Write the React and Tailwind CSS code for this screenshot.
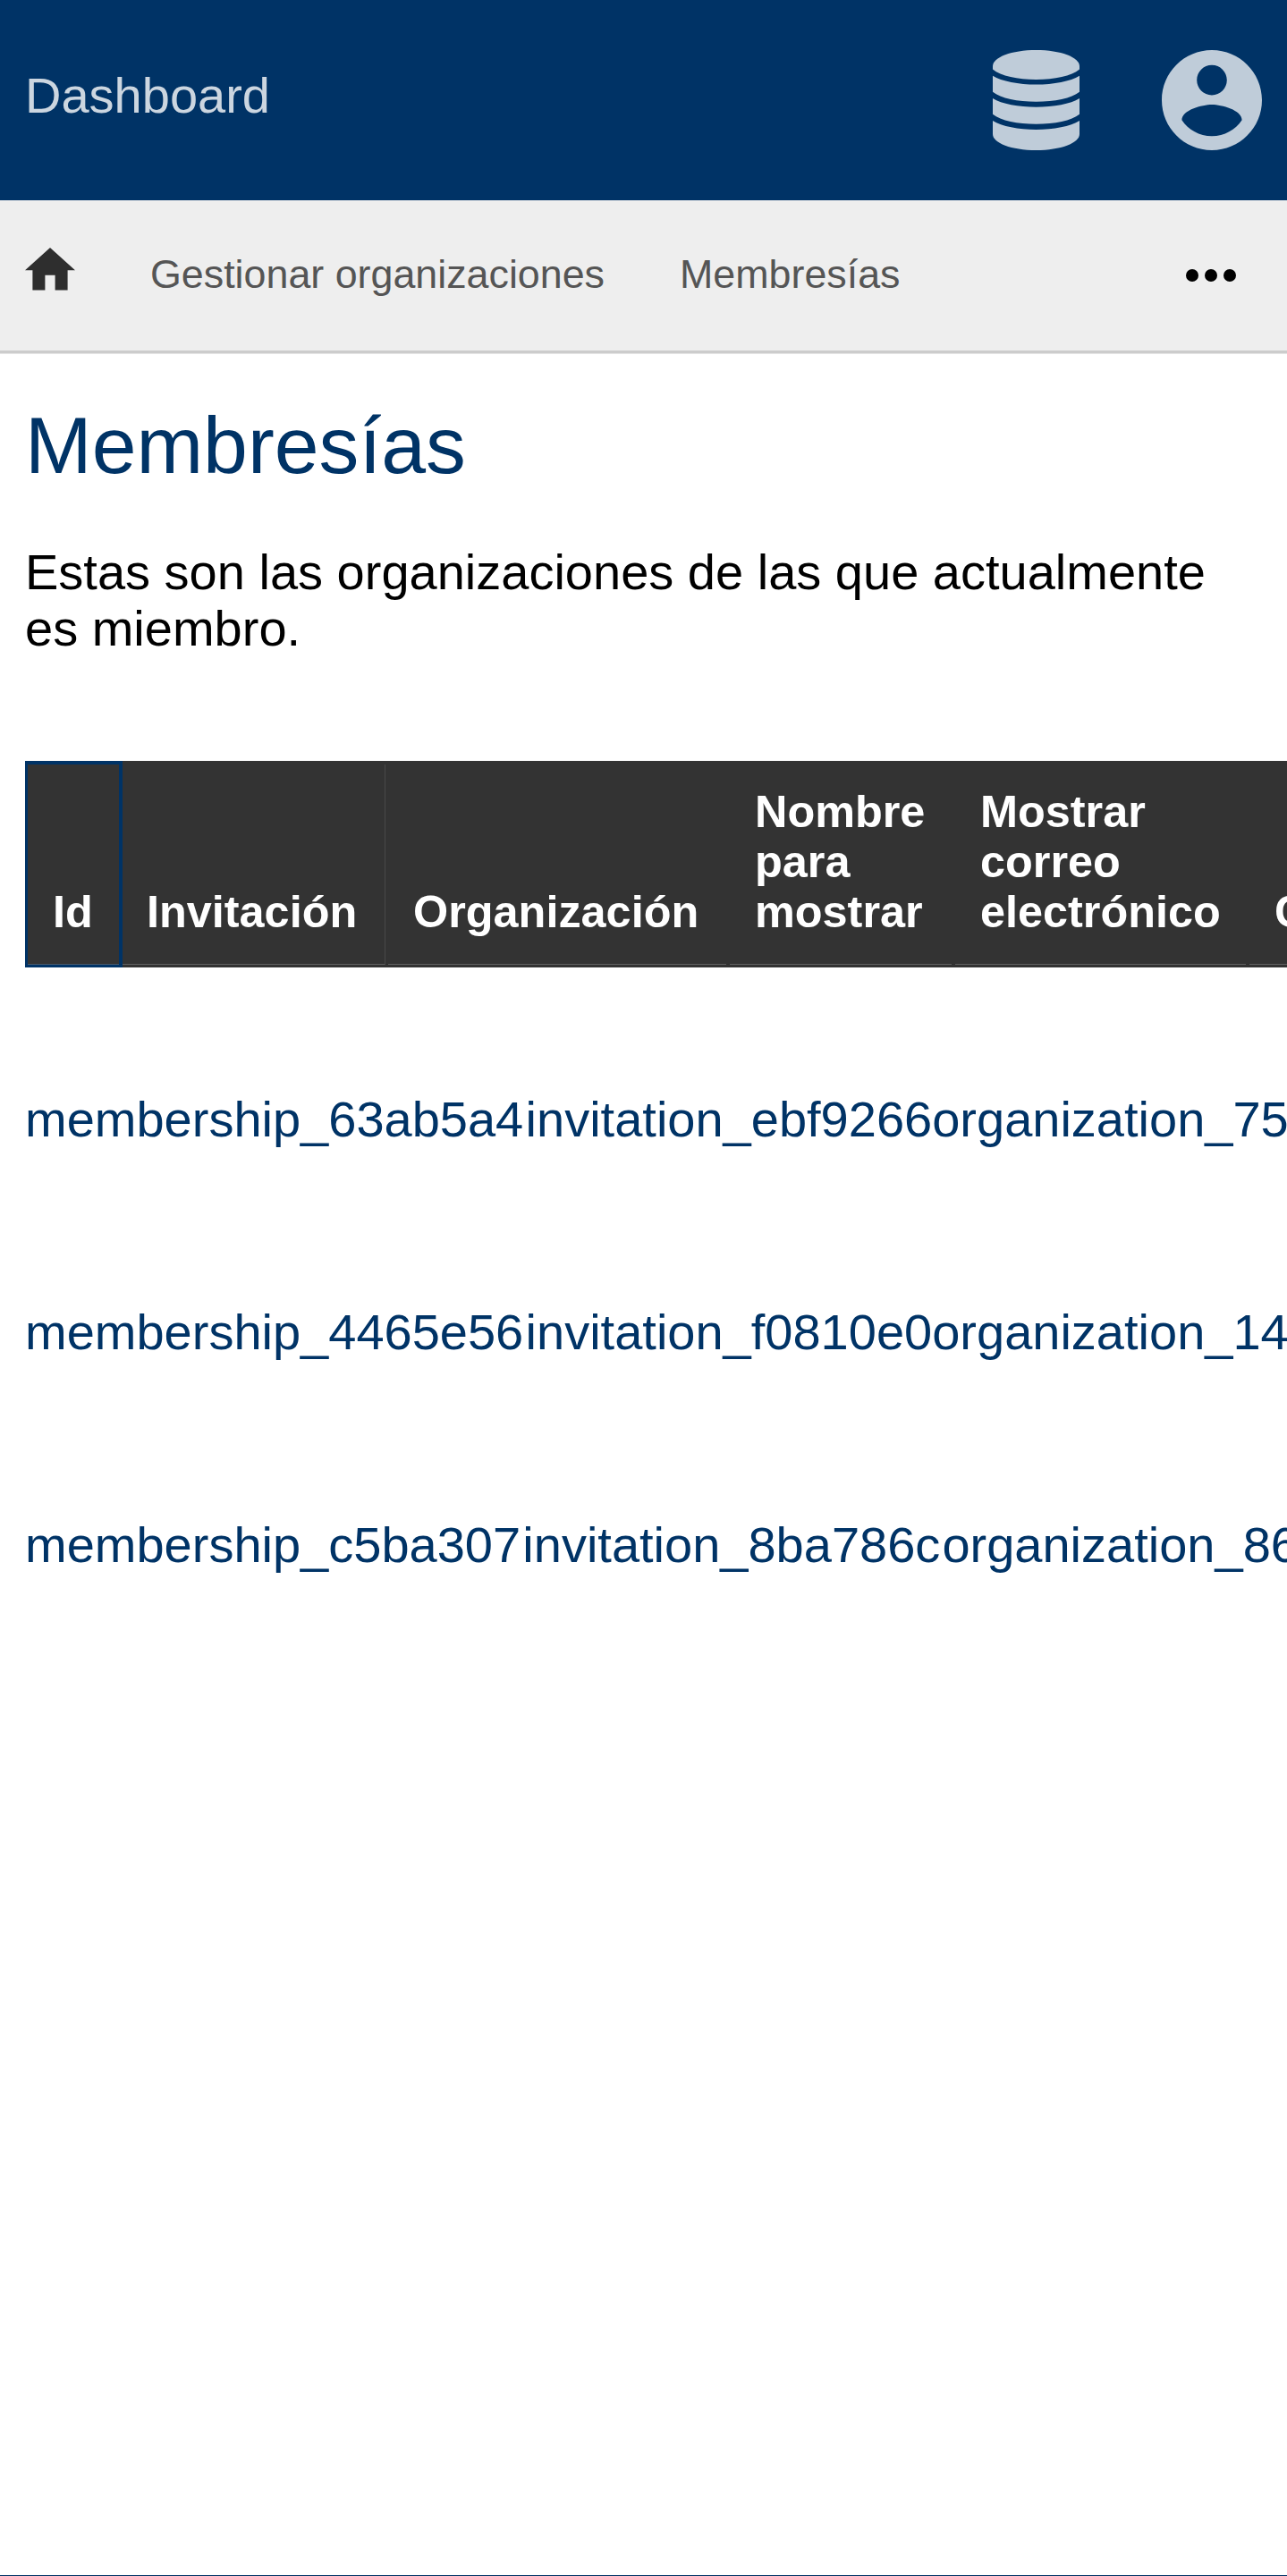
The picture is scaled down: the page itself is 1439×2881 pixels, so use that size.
const COLUMNS = [
  {
    label: "Id",
    cell: "w-[109px] border-l-[3px] border-r-4 border-[#003366]",
    inner: "pl-7 border-[#48586a]",
  },
  {
    label: "Invitación",
    cell: "w-[297px] border-r-[3px] border-[#333333]",
    inner: "pl-[27px] border-r border-r-[#484848] border-b-[#606060]",
  },
  { label: "Organización", cell: "w-[382px] border-r-4 border-[#333333]", inner: "pl-7 border-[#606060]" },
  { label: "Nombre para mostrar", cell: "w-[252px] border-r-4 border-[#333333]", inner: "pl-7 border-[#606060]" },
  { label: "Mostrar correo electrónico", cell: "w-[329px] border-r-4 border-[#333333]", inner: "pl-7 border-[#606060]" },
  { label: "Creado", cell: "w-[260px] border-r-4 border-[#333333]", inner: "pl-7 border-[#606060]" },
];

const ROWS = [
  [
    { text: "membership_63ab5a4", width: "w-[559.6px]" },
    { text: "invitation_ebf9266", width: "w-[454.6px]" },
    { text: "organization_75", width: "w-max" },
  ],
  [
    { text: "membership_4465e56", width: "w-[559.6px]" },
    { text: "invitation_f0810e0", width: "w-[454.6px]" },
    { text: "organization_14", width: "w-max" },
  ],
  [
    { text: "membership_c5ba307", width: "w-[556.3px]" },
    { text: "invitation_8ba786c", width: "w-[469.1px]" },
    { text: "organization_86", width: "w-max" },
  ],
];

function DatabaseIcon() {
  return (
    <svg className="h-[112px] w-[97px]" viewBox="0 0 97 112" fill="currentColor">
      <path d="M0 18C0 8 21 0 48.500 0S97 8 97 18V21.500C88 29 69 33 48.500 33S9 29 0 21.500Z" />
      <path d="M0 28.700C10 35 29 38.500 48.500 38.500S87 35 97 28.700V46.700C88 54 69 57.700 48.500 57.700S9 54 0 46.700Z" />
      <path d="M0 54C10 60.300 29 63.700 48.500 63.700S87 60.300 97 54V71.700C88 79 69 82.700 48.500 82.700S9 79 0 71.700Z" />
      <path d="M0 79C10 85.300 29 89 48.500 89S87 85.300 97 79V94C97 104 76 112 48.500 112S0 104 0 94Z" />
    </svg>
  );
}

function AccountIcon() {
  return (
    <svg className="h-[112px] w-[112px]" viewBox="2 2 20 20" fill="currentColor">
      <path d="M12 2C6.480 2 2 6.480 2 12s4.480 10 10 10 10-4.480 10-10S17.520 2 12 2zm0 3c1.660 0 3 1.340 3 3s-1.340 3-3 3-3-1.340-3-3 1.340-3 3-3zm0 14.200c-2.500 0-4.710-1.280-6-3.220.030-1.990 4-3.080 6-3.080 1.990 0 5.970 1.090 6 3.080-1.290 1.940-3.500 3.220-6 3.220z" />
    </svg>
  );
}

function HomeIcon() {
  return (
    <svg className="mb-3.5 h-[47.6px] w-14 text-[#2e2e2e]" viewBox="2 3 20 17" fill="currentColor">
      <path d="M10 20v-6h4v6h5v-8h3L12 3 2 12h3v8z" />
    </svg>
  );
}

function MoreIcon() {
  return (
    <svg className="h-[84px] w-[84px] text-black" viewBox="0 0 24 24" fill="currentColor">
      <circle cx="6" cy="12" r="2" />
      <circle cx="12" cy="12" r="2" />
      <circle cx="18" cy="12" r="2" />
    </svg>
  );
}

export default function App() {
  return (
    <div className="flex h-[2881px] w-full flex-col overflow-hidden border-b border-[#003366] bg-white font-['Liberation_Sans',Arial,sans-serif] text-[56px] leading-[63px] text-black">
      <header className="flex h-[224px] shrink-0 items-center bg-[#003366] px-7">
        <span className="mb-[11px] text-[#ccd6e0]">Dashboard</span>
        <div className="ml-auto flex gap-[92px] text-[#bfccd9]">
          <DatabaseIcon />
          <AccountIcon />
        </div>
      </header>

      <nav className="flex h-[171px] shrink-0 items-center border-b-[3px] border-[#cccccc] bg-[#eeeeee] pl-7 pr-[43px] text-[44.8px] text-[#555555] shadow-[0_1px_0_#e5e5e5]">
        <HomeIcon />
        <a className="mb-[3px] ml-[84px]">Gestionar organizaciones</a>
        <a className="mb-[3px] ml-[84px]">Membresías</a>
        <button className="ml-auto">
          <MoreIcon />
        </button>
      </nav>

      <main className="pt-[52px]">
        <h1 className="px-7 text-[89.6px] leading-[102px] text-[#003366]">Membresías</h1>
        <p className="mt-[59px] px-7">Estas son las organizaciones de las que actualmente es miembro.</p>

        <div className="mt-[117px] ml-7 flex h-[231px] w-max bg-[#333333] text-[50.4px] leading-14 font-bold text-white">
          {COLUMNS.map((c) => (
            <div key={c.label} className={`${c.cell} flex border-t-4 border-b-[3px]`}>
              <div className={`${c.inner} flex flex-1 items-end border-b pr-6 pb-[30px]`}>
                {c.label}
              </div>
            </div>
          ))}
        </div>

        <div className="mt-[50.5px] ml-7 text-[#003366]">
          {ROWS.map((row) => (
            <div key={row[0].text} className="flex h-[238px] w-max items-center">
              {row.map((link) => (
                <a key={link.text} className={`${link.width} whitespace-nowrap`}>
                  {link.text}
                </a>
              ))}
            </div>
          ))}
        </div>
      </main>
    </div>
  );
}
